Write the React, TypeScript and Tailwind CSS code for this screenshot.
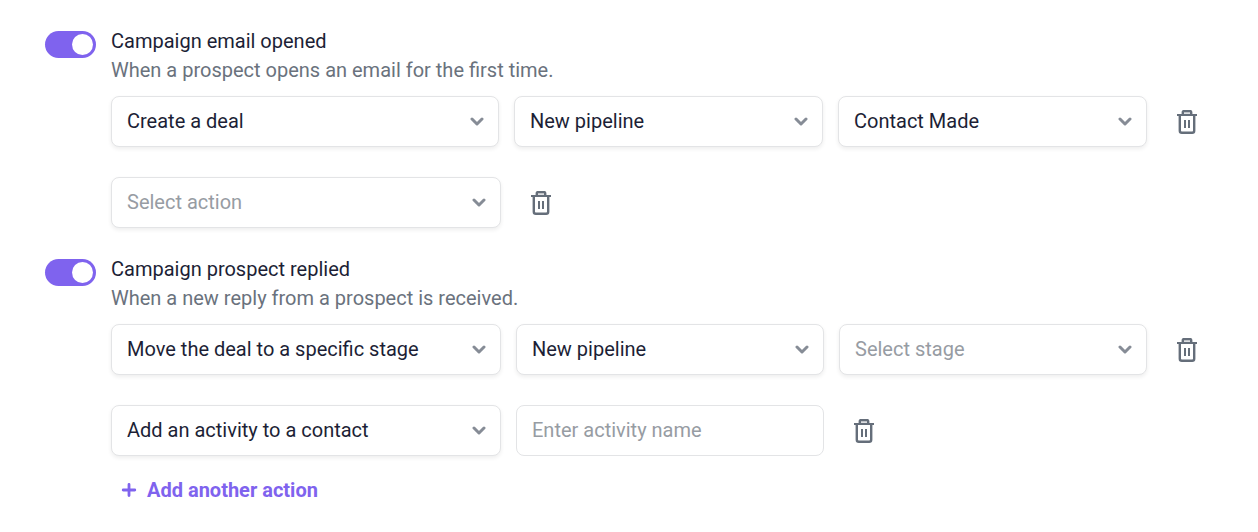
import * as React from "react";
import clsx from "clsx";

type Field = {
  label: string;
  kind?: "select" | "input";
  value?: string;
  placeholder?: string;
  options?: string[];
};

type Trigger = {
  id: string;
  title: string;
  desc: string;
  rows: { id: string; className: string; fields: Field[] }[];
  canAdd?: boolean;
};

const actions = ["Create a deal", "Move the deal to a specific stage", "Add an activity to a contact"];
const pipelines = ["New pipeline"];
const stages = ["Contact Made"];

const wideCols = "grid-cols-[390fr_308fr_308fr_51px]";
const dealCols = "grid-cols-[388fr_309fr_309fr_51px]";

const triggers: Trigger[] = [
  {
    id: "email-opened",
    title: "Campaign email opened",
    desc: "When a prospect opens an email for the first time.",
    rows: [
      {
        id: "create-deal",
        className: dealCols,
        fields: [
          { label: "Action", value: "Create a deal", options: actions },
          { label: "Pipeline", value: "New pipeline", options: pipelines },
          { label: "Stage", value: "Contact Made", options: stages },
        ],
      },
      {
        id: "empty-action",
        className: wideCols,
        fields: [{ label: "Action", placeholder: "Select action", options: actions }],
      },
    ],
  },
  {
    id: "prospect-replied",
    title: "Campaign prospect replied",
    desc: "When a new reply from a prospect is received.",
    canAdd: true,
    rows: [
      {
        id: "move-deal",
        className: wideCols,
        fields: [
          { label: "Action", value: "Move the deal to a specific stage", options: actions },
          { label: "Pipeline", value: "New pipeline", options: pipelines },
          { label: "Stage", placeholder: "Select stage", options: stages },
        ],
      },
      {
        id: "add-activity",
        className: wideCols,
        fields: [
          { label: "Action", value: "Add an activity to a contact", options: actions },
          { label: "Activity name", kind: "input", placeholder: "Enter activity name" },
        ],
      },
    ],
  },
];

function TrashIcon() {
  return (
    <svg width="21" height="24" viewBox="0 0 21 24" fill="none" stroke="#656e7a" strokeWidth="2.4" aria-hidden="true">
      <path d="M5.8 5V2.2Q5.8 1.1 7 1.1h6q1.2 0 1.2 1.1V5" fill="#dcdee1" />
      <path d="M0 5h20" strokeWidth="2" />
      <path d="M2.8 5v15.8q0 2 2 2h10.4q2 0 2-2V5" />
      <path d="M8 10v8M12 10v8" strokeWidth="2" />
    </svg>
  );
}

function Toggle({ id }: { id: string }) {
  return (
    <input
      id={id}
      type="checkbox"
      role="switch"
      defaultChecked
      className="mt-1 h-[27px] w-[51px] shrink-0 cursor-pointer appearance-none rounded-full bg-gray-300 p-[3px] before:block before:size-[21px] before:rounded-full before:bg-white before:transition-transform checked:bg-[#7f63ee] checked:before:translate-x-6"
    />
  );
}

function SelectField({ field }: { field: Field }) {
  const [value, setValue] = React.useState(field.value ?? "");

  return (
    <div className="relative min-w-0">
      <select
        aria-label={field.label}
        value={value}
        onChange={(e) => setValue(e.target.value)}
        className={clsx(
          "block h-[51px] w-full cursor-pointer appearance-none rounded-lg border border-[#e3e4e6] bg-white pr-10 pl-[15px] shadow-[0_2px_4px_rgba(0,0,0,0.07)]",
          value ? "text-[#1d1f36]" : "text-[#979ca3]"
        )}
      >
        {field.placeholder && (
          <option value="" disabled>
            {field.placeholder}
          </option>
        )}
        {field.options?.map((option) => (
          <option key={option}>{option}</option>
        ))}
      </select>
      <svg
        width="14"
        height="9"
        viewBox="0 0 14 9"
        fill="none"
        stroke="#868c96"
        strokeWidth="3"
        strokeLinecap="round"
        strokeLinejoin="round"
        className="pointer-events-none absolute inset-y-0 right-[15px] my-auto"
        aria-hidden="true"
      >
        <path d="M2 2l5 5 5-5" />
      </svg>
    </div>
  );
}

function TriggerSection({ trigger }: { trigger: Trigger }) {
  return (
    <section className="flex gap-[15px]">
      <Toggle id={trigger.id} />
      <div className="min-w-0 flex-1">
        <label htmlFor={trigger.id} className="block">
          {trigger.title}
        </label>
        <p className="text-[#6a727d]">{trigger.desc}</p>

        <div className="mt-[11px] flex flex-col gap-[30px]">
          {trigger.rows.map((row) => (
            <div key={row.id} className={clsx("grid gap-[15px]", row.className)}>
              {row.fields.map((field) =>
                field.kind === "input" ? (
                  <input
                    key={field.label}
                    type="text"
                    aria-label={field.label}
                    placeholder={field.placeholder}
                    className="h-[51px] w-full min-w-0 rounded-lg border border-[#e3e4e6] px-[15px] pb-0.5 placeholder:text-[#979ca3]"
                  />
                ) : (
                  <SelectField key={field.label} field={field} />
                )
              )}
              <button type="button" aria-label="Delete action" className="flex h-[51px] w-[51px] cursor-pointer items-center justify-center">
                <TrashIcon />
              </button>
            </div>
          ))}
        </div>

        {trigger.canAdd && (
          <button type="button" className="mt-5 ml-[10px] flex cursor-pointer items-center gap-[10px] font-bold text-[#7f63ee]">
            <svg width="16" height="16" viewBox="0 0 16 16" stroke="currentColor" strokeWidth="2.8" strokeLinecap="round" aria-hidden="true">
              <path d="M8 1.4v11.2M2.2 7h11.6" />
            </svg>
            Add another action
          </button>
        )}
      </div>
    </section>
  );
}

export default function App() {
  return (
    <main className="flex flex-col gap-[27px] bg-white px-[45px] py-[27px] font-['Roboto',sans-serif] text-[20px] leading-[29px] text-[#1d1f36]">
      {triggers.map((trigger) => (
        <TriggerSection key={trigger.id} trigger={trigger} />
      ))}
    </main>
  );
}
